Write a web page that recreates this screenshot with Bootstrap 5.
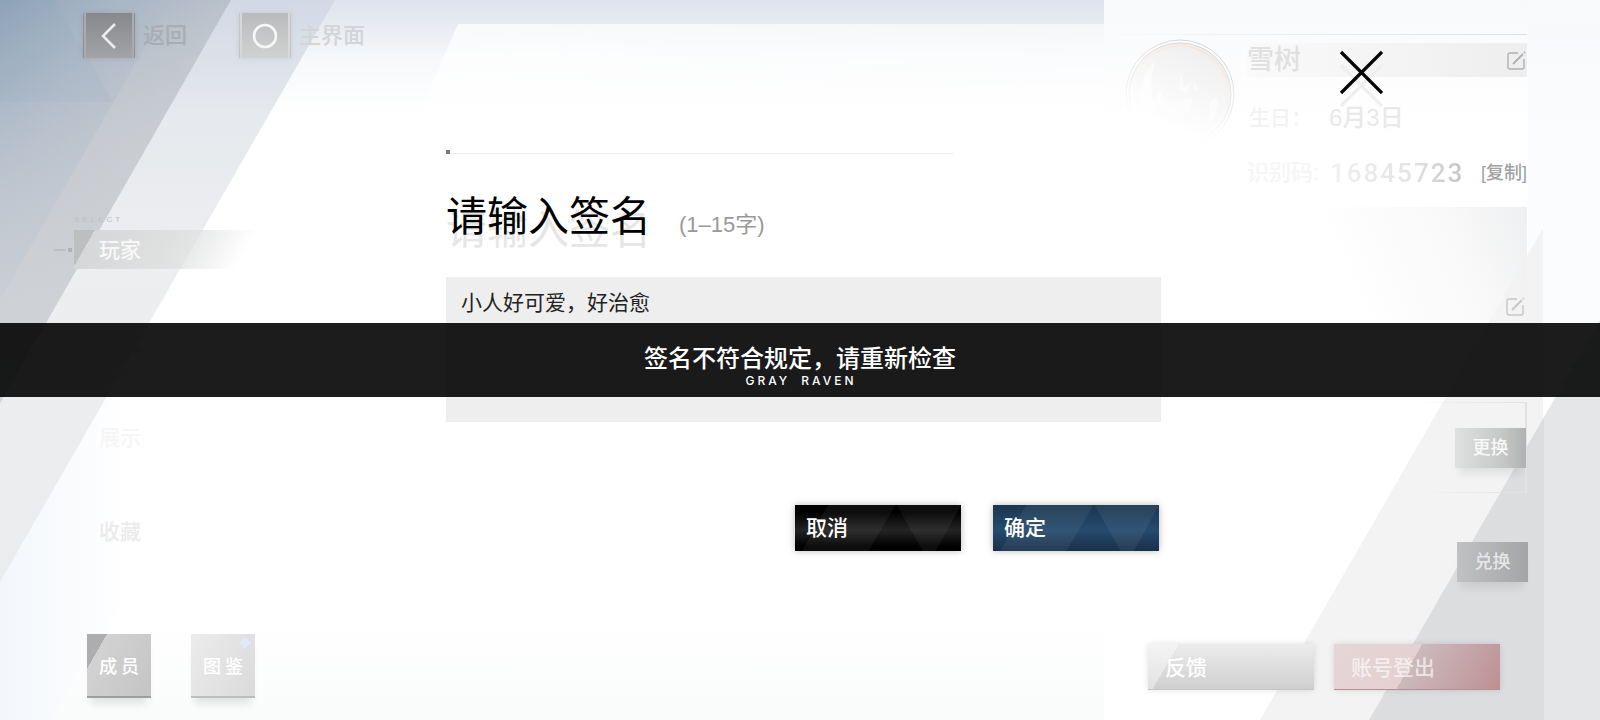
<!DOCTYPE html>
<html lang="zh-CN">
<head>
<meta charset="utf-8">
<meta name="viewport" content="width=device-width, initial-scale=1">
<title>请输入签名</title>
<link rel="stylesheet" href="https://cdn.jsdelivr.net/npm/bootstrap@5.3.0/dist/css/bootstrap.min.css">
<style>
  body { font-family: "Liberation Sans", "Noto Sans CJK SC", sans-serif; background: #fff; font-size: 21px; line-height: 32px; }
  button { font: inherit; font-weight: 500; }
  .plain { border: 0; padding: 0; background: none; }
  .stage { display: grid; grid-template-columns: minmax(0, 1fr); overflow: hidden; }
  .stage > * { grid-area: 1 / 1; min-width: 0; }
  .backdrop-art { width: 100%; height: 100%; position: absolute; inset: 0; }

  /* header */
  .top-bar { padding: 13px 0 0 83px; gap: 52px; font-size: 22px; }
  .top-btn { gap: 8px; color: #a8adb3; }
  .top-btn .tile { width: 52px; height: 45px; background: linear-gradient(#87888b, #a3a4a7); border: solid #8f9194; border-width: 0 1px; box-shadow: 0 0 5px #85888c66, inset 3px 0 0 -1px #a9abad, inset -3px 0 0 -1px #a9abad; }
  .top-btn.pale { color: #d2d5d8; }
  .top-btn.pale .tile { background: linear-gradient(#b9bbbc, #d0d1d1); border-color: #c3c5c7; box-shadow: 0 0 5px #a5a8ac55, inset 3px 0 0 -1px #d6d8da, inset -3px 0 0 -1px #d6d8da; }

  /* side navigation */
  .side-nav { width: 260px; padding-left: 54px; margin-top: 156px; }
  .select-tag { font-size: 8px; line-height: 12px; letter-spacing: 3px; color: #bcbfc3; padding-left: 20px; margin-bottom: 4px; }
  .side-item { height: 39px; margin-bottom: 55px; gap: 2px; width: 100%; }
  .side-item .face { height: 39px; flex: 1; padding-left: 25px; text-align: left; display: flex; align-items: center; }
  .side-item.on .face { color: #f8f8f8; background: linear-gradient(120deg, #bcbec0 10%, #d6d7d8 10%, #dfe0e0 50%, #eeefef00 88%); }
  .side-item .dash { width: 12px; height: 2px; background: #bcc0c4; }
  .side-item .dot { width: 4px; height: 4px; background: #b0b3b6; }
  .side-item.off .face { margin-left: 20px; }
  .tone-a { color: #e4e4e4; } .tone-b { color: #f6f6f6; } .tone-c { color: #ebebeb; }

  /* bottom */
  .bottom-bar { padding: 0 100px 22px 87px; }
  .tiles { gap: 40px; } .wides { gap: 20px; padding-top: 2px; }
  .square-btn { width: 64px; height: 64px; color: #fff; font-size: 18px; letter-spacing: 4px; padding: 4px 0 0 4px; border-bottom: 2px solid #9d9d9d;
    background: linear-gradient(120deg, #adadad 20%, #d2d2d2 20%, #c4c4c4); box-shadow: 0 10px 8px -4px #0000001a; }
  .square-btn.pale { background: linear-gradient(120deg, #ececec, #dadada); border-color: #bdbdbd; }
  .gem { width: 8px; height: 8px; top: 5px; right: 6px; transform: rotate(45deg); background: #dfeaf8; }
  .wide-btn { width: 166px; height: 46px; padding: 3px 0 0 17px; text-align: left; color: #fff; box-shadow: 0 0 6px #0000001f; border-bottom: 1px solid #c6c6c6; }
  .wide-btn.feedback { background: linear-gradient(120deg, #ffffff66 16%, #fff0 16%), linear-gradient(#ececec, #cfcfcf); }
  .wide-btn.logout { color: #ffffffa6; border-color: #b38f91; background: linear-gradient(120deg, #e5d6d8, #e4d0d1 46%, #cbbabd 46%, #bd9093); }

  /* profile panel */
  .profile { width: 406px; margin-right: 73px; margin-top: -24px; }
  .profile-line { height: 1px; background: linear-gradient(90deg, #f8f8f8, #dedfe0); }
  .avatar { width: 110px; height: 110px; }
  .profile-info { width: 280px; }
  .name-bar { height: 34px; font-size: 27px; font-weight: 500; color: #e0e0e0; background: linear-gradient(90deg, #fafafa, #eeeeef); padding-right: 1px; }
  .birth-row { height: 36px; margin-top: 23px; color: #f2f2f2; font-weight: 500; }
  .birth-label { width: 82px; padding-left: 2px; }
  .birth-date { font-size: 24px; color: #e9e9e9; }
  .id-row { height: 36px; margin-top: 19px; color: #f6f6f6; font-weight: 500; }
  .id-label { width: 83px; font-size: 22px; }
  .id-digits { font-family: Roboto, "Liberation Sans", sans-serif; font-size: 26px; letter-spacing: 2px; width: 138px; color: transparent; background: linear-gradient(90deg, #f1f1f1, #e2e3e4 60%, #c0c2c5); -webkit-background-clip: text; background-clip: text; }
  .copy-btn { font-size: 18px; color: #a0a1a2; }
  .sign-box { height: 113px; width: 280px; margin-top: 16px; background: linear-gradient(66deg, #fff0 35%, #f6f6f7b3 75%, #eeeff0); padding: 0 2px 4px; }
  .swap-box { width: 110px; height: 91px; margin-top: 82px; border: solid #e6e6e7; border-width: 1px 2px 1px 0; border-image: linear-gradient(90deg, #e6e6e700, #e2e2e3) 1; padding-top: 25px; }
  .small-btn { width: 71px; height: 40px; font-size: 18px; color: #f8f8f8; background: linear-gradient(90deg, #dfe0e0, #c4c5c5 70%, #b0b1b1); box-shadow: 0 10px 8px -4px #00000014; }
  .swap-box .small-btn { margin-right: -1px; }
  .small-btn.dim { color: #e6e7e8; background: linear-gradient(90deg, #c0c1c2, #a4a5a7); margin: 49px -1px 0 0; }

  /* dialog */
  .dialog-layer { display: grid; grid-template-columns: minmax(0, 446fr) minmax(0, 715fr) minmax(0, 439fr); z-index: 2; padding-top: 50px; align-content: start; }
  .dialog-layer > * { grid-row: 1; }
  .sign-dialog { grid-column: 2; padding-top: 100px; }
  .close-btn { grid-column: 3; width: 44px; height: 58px; margin-left: 178px; }
  .rule-dot { width: 4px; height: 4px; background: #777; }
  .rule-line { width: 503px; height: 1px; background: #ededed; }
  .title-row { margin: 33px 0 30px; gap: 28px; }
  .dialog-title { font-size: 41px; line-height: 60px; color: #000; text-shadow: 0 13px 0 #e6e6e6; }
  .dialog-hint { font-size: 22px; line-height: 36px; color: #999; padding-bottom: 4px; }
  .sign-input { height: 145px; width: 100%; resize: none; border: 0; border-radius: 0; background: #eee; color: #222; padding: 10px 15px; display: block; outline: 0; }
  .dialog-actions { margin-top: 83px; gap: 32px; padding-right: 2px; }
  .act-btn { width: 166px; height: 46px; padding-left: 11px; color: #fff; text-align: left; box-shadow: 0 0 7px #00000047; overflow: hidden; }
  .act-btn svg { position: absolute; inset: 0; width: 100%; height: 100%; }
  .act-btn span { position: relative; }
  .act-btn.cancel { background: linear-gradient(#000 15%, #242424 55%, #000 90%); }
  .act-btn.confirm { background: linear-gradient(#1b3650, #254b6d 55%, #1a3049); }

  /* notice */
  .notice { align-self: center; z-index: 3; height: 74px; background: #000000e3; color: #fff; padding-top: 20px; }
  .notice-text { font-size: 24px; line-height: 32px; font-weight: 500; }
  .notice-sub { font-family: Inter, "Liberation Sans", sans-serif; font-weight: 500; font-size: 12px; line-height: 12px; letter-spacing: 3px; padding-left: 2px; word-spacing: 5px; }
</style>
</head>
<body>
<div class="stage min-vh-100 position-relative">
  <svg class="backdrop-art" viewBox="0 0 1600 720" preserveAspectRatio="none" aria-hidden="true">
    <defs>
      <linearGradient id="skyTop" x1="0" y1="0" x2="0" y2="1"><stop offset="0" stop-color="#dde3ee"/><stop offset=".25" stop-color="#e9ecf1"/><stop offset=".5" stop-color="#f6f8fa"/><stop offset="1" stop-color="#fff"/></linearGradient>
      <linearGradient id="trap" x1="0" y1="0" x2="1" y2="0"><stop offset="0" stop-color="#fff" stop-opacity=".75"/><stop offset="1" stop-color="#fff" stop-opacity=".55"/></linearGradient>
      <linearGradient id="bandA" gradientUnits="userSpaceOnUse" x1="0" y1="0" x2="200" y2="115"><stop offset="0" stop-color="#8fa4b9"/><stop offset=".45" stop-color="#a9b6c5"/><stop offset="1" stop-color="#bfc5cd"/></linearGradient>
      <linearGradient id="fade" x1="0" y1="0" x2="0" y2="1"><stop offset="0" stop-color="#d0d4d9" stop-opacity="0"/><stop offset=".6" stop-color="#ccd0d6" stop-opacity=".75"/><stop offset="1" stop-color="#d6d9de" stop-opacity=".95"/></linearGradient>
      <linearGradient id="strip" x1="0" y1="0" x2="0" y2="1"><stop offset="0" stop-color="#d2d2d3" stop-opacity="0"/><stop offset=".35" stop-color="#d2d2d3" stop-opacity=".45"/><stop offset="1" stop-color="#d2d2d3" stop-opacity=".4"/></linearGradient>
      <linearGradient id="bandB" x1="0" y1="0" x2="0" y2="1"><stop offset="0" stop-color="#d2d9e5"/><stop offset=".2" stop-color="#e6e9ed"/><stop offset=".45" stop-color="#edeef0"/><stop offset="1" stop-color="#ebecee"/></linearGradient>
      <linearGradient id="edge" gradientUnits="userSpaceOnUse" x1="0" y1="0" x2="130" y2="0"><stop offset="0" stop-color="#f3f7fb"/><stop offset="1" stop-color="#fff"/></linearGradient>
      <linearGradient id="panelTop" x1="0" y1="0" x2="0" y2="1"><stop offset="0" stop-color="#f8f9fb"/><stop offset="1" stop-color="#fff"/></linearGradient>
      <linearGradient id="low" x1="0" y1="0" x2="0" y2="1"><stop offset="0" stop-color="#fff"/><stop offset="1" stop-color="#fafbfb"/></linearGradient>
    </defs>
    <path fill="#fff" d="M0 0H1600V720H0z"/>
    <path fill="url(#skyTop)" d="M0 0H1104V115H0z"/>
    <path fill="url(#trap)" d="M458 24H1104V120H416z"/>
    <path fill="url(#low)" d="M0 620H1104V720H0z"/>
    <path fill="url(#panelTop)" d="M1104 0H1600V120H1104z"/>
    <path fill="#f6f8fb" fill-opacity=".4" d="M1528 24H1600V340H1528z"/>
    <path fill="url(#edge)" d="M0 400H145L130 590L52 720H0z"/>
    <path fill="url(#bandB)" d="M231 0H335L0 582V403z"/>
    <path fill="url(#bandA)" d="M0 0H231L0 403z"/>
    <path fill="url(#fade)" d="M0 0H231L0 403z"/>
    <path fill="#8098b0" fill-opacity=".08" d="M0 0H54L113 102H0z"/>
    <path fill="url(#strip)" d="M172 0H231L0 403V300z"/>
    <path fill="#f3f3f4" d="M1543 228V720H1260z"/>
    <path fill="#dcdddf" d="M1544 417V720H1369z"/>
    <path fill="#e5e6e7" d="M1600 320V720H1544V417z"/>
  </svg>

  <div class="position-relative d-flex flex-column">
    <header class="top-bar d-flex align-items-center">
      <button class="top-btn plain d-flex align-items-center">
        <span class="tile d-flex align-items-center justify-content-center"><svg width="16" height="26" viewBox="0 0 16 26" fill="none" stroke="#ededed" stroke-width="2.5"><path d="M14 1L2 13L14 25"/></svg></span>
        <span>返回</span>
      </button>
      <button class="top-btn pale plain d-flex align-items-center">
        <span class="tile d-flex align-items-center justify-content-center"><svg width="26" height="26" viewBox="0 0 26 26" fill="none" stroke="#f7f7f7" stroke-width="2.6"><circle cx="13" cy="13" r="11"/></svg></span>
        <span>主界面</span>
      </button>
    </header>

    <main class="d-flex justify-content-between flex-grow-1">
      <nav class="side-nav">
        <div class="select-tag">SELECT</div>
        <button class="side-item on plain d-flex align-items-center"><span class="dash"></span><span class="dot"></span><span class="face">玩家</span></button>
        <button class="side-item off plain d-flex align-items-center"><span class="face tone-a">成就</span></button>
        <button class="side-item off plain d-flex align-items-center"><span class="face tone-b">展示</span></button>
        <button class="side-item off plain d-flex align-items-center mb-0"><span class="face tone-c">收藏</span></button>
      </nav>

      <section class="profile d-flex flex-column align-items-end">
        <div class="profile-line w-100"></div>
        <div class="d-flex justify-content-between w-100">
          <svg class="avatar mt-1 ms-1" viewBox="0 0 110 110" aria-hidden="true">
            <defs>
              <linearGradient id="face" x1=".7" y1="0" x2=".35" y2=".8"><stop offset="0" stop-color="#eee"/><stop offset=".6" stop-color="#f8f8f8"/><stop offset="1" stop-color="#fff"/></linearGradient>
              <linearGradient id="ring" x1=".65" y1="0" x2=".35" y2=".85"><stop offset="0" stop-color="#d4d4d4"/><stop offset="1" stop-color="#fff"/></linearGradient>
              <linearGradient id="gold" x1=".65" y1="0" x2=".4" y2=".65"><stop offset="0" stop-color="#f6e4d6"/><stop offset="1" stop-color="#fff"/></linearGradient>
            </defs>
            <circle cx="55" cy="55" r="54" fill="none" stroke="url(#ring)"/>
            <circle cx="55" cy="55" r="51" fill="url(#face)" stroke="url(#ring)"/>
            <circle cx="55" cy="55" r="48" fill="none" stroke="url(#gold)" stroke-width="1.5"/>
            <g fill="#fff" fill-opacity=".5"><path d="M26 26Q12 45 15 64Q20 74 31 70Q22 48 30 22z"/><path d="M40 46L36 60L30 66L33 54zM56 34L59 48L66 44L62 54L54 50zM70 44L74 52L68 50zM84 64L93 58Q94 74 84 84Q86 74 84 64z"/><path fill-opacity=".35" d="M32 58Q44 64 68 58Q66 76 52 80Q38 78 32 58z"/></g>
          </svg>
          <div class="profile-info">
            <div class="name-bar d-flex align-items-center justify-content-between mt-2">
              <span>雪树</span>
              <button class="plain d-flex" aria-label="修改名字"><svg width="19" height="19" viewBox="0 0 19 19" fill="none" stroke="#b0b0b1" stroke-width="1.4"><path d="M11 2H3Q1 2 1 4V16Q1 18 3 18H15Q17 18 17 16V8"/><path d="M6 13L16 3M17 2L18 1" stroke-width="1.8"/></svg></button>
            </div>
            <div class="d-flex align-items-center birth-row"><span class="birth-label">生日：</span><span class="birth-date">6月3日</span></div>
            <div class="d-flex align-items-center id-row"><span class="id-label">识别码:</span><span class="id-digits">16845723</span><button class="copy-btn plain ms-auto">[复制]</button></div>
          </div>
        </div>
        <div class="sign-box d-flex align-items-end justify-content-end">
          <button class="plain d-flex" aria-label="修改签名"><svg width="19" height="19" viewBox="0 0 19 19" fill="none" stroke="#c6c6c6" stroke-width="1.4"><path d="M11 2H3Q1 2 1 4V16Q1 18 3 18H15Q17 18 17 16V8"/><path d="M6 13L16 3M17 2L18 1" stroke-width="1.8"/></svg></button>
        </div>
        <div class="swap-box d-flex justify-content-end align-items-start"><button class="small-btn border-0 p-0">更换</button></div>
        <button class="small-btn dim border-0 p-0">兑换</button>
      </section>
    </main>

    <footer class="bottom-bar d-flex justify-content-between align-items-center">
      <div class="d-flex tiles">
        <button class="square-btn border-top-0 border-start-0 border-end-0">成员</button>
        <button class="square-btn pale border-top-0 border-start-0 border-end-0 position-relative">图鉴<span class="gem position-absolute"></span></button>
      </div>
      <div class="d-flex wides">
        <button class="wide-btn feedback border-top-0 border-start-0 border-end-0">反馈</button>
        <button class="wide-btn logout border-top-0 border-start-0 border-end-0">账号登出</button>
      </div>
    </footer>
  </div>

  <div class="dialog-layer position-relative" role="dialog" aria-labelledby="signTitle">
    <form class="sign-dialog" onsubmit="return false">
      <div class="d-flex align-items-end"><span class="rule-dot"></span><span class="rule-line"></span></div>
      <div class="title-row d-flex align-items-end">
        <label class="dialog-title" id="signTitle" for="signText">请输入签名</label>
        <span class="dialog-hint">(1–15字)</span>
      </div>
      <textarea class="sign-input" id="signText">小人好可爱，好治愈</textarea>
      <div class="dialog-actions d-flex justify-content-end">
        <button type="button" class="act-btn cancel border-0 position-relative"><svg viewBox="0 0 165 46" preserveAspectRatio="none" fill="#fff" fill-opacity=".05" aria-hidden="true"><path d="M33 0H100L73 46H7zM101 0H165L140 46H127z"/></svg><span>取消</span></button>
        <button type="submit" class="act-btn confirm border-0 position-relative"><svg viewBox="0 0 165 46" preserveAspectRatio="none" fill="#fff" fill-opacity=".06" aria-hidden="true"><path d="M33 0H100L73 46H7zM101 0H165L140 46H127z"/></svg><span>确定</span></button>
      </div>
    </form>
    <button class="close-btn plain" aria-label="关闭"><svg class="d-block" width="44" height="58" viewBox="0 0 44 58" fill="none" stroke-width="3.2"><path stroke="#eeeff0" d="M2 15L43 56M43 15L2 56"/><path stroke="#000" d="M2 2L43 43M43 2L2 43"/></svg></button>
  </div>

  <div class="notice position-relative text-center" role="alert">
    <div class="notice-text">签名不符合规定，请重新检查</div>
    <div class="notice-sub">GRAY RAVEN</div>
  </div>
</div>
<script src="https://cdn.jsdelivr.net/npm/bootstrap@5.3.0/dist/js/bootstrap.bundle.min.js"></script>
</body>
</html>
